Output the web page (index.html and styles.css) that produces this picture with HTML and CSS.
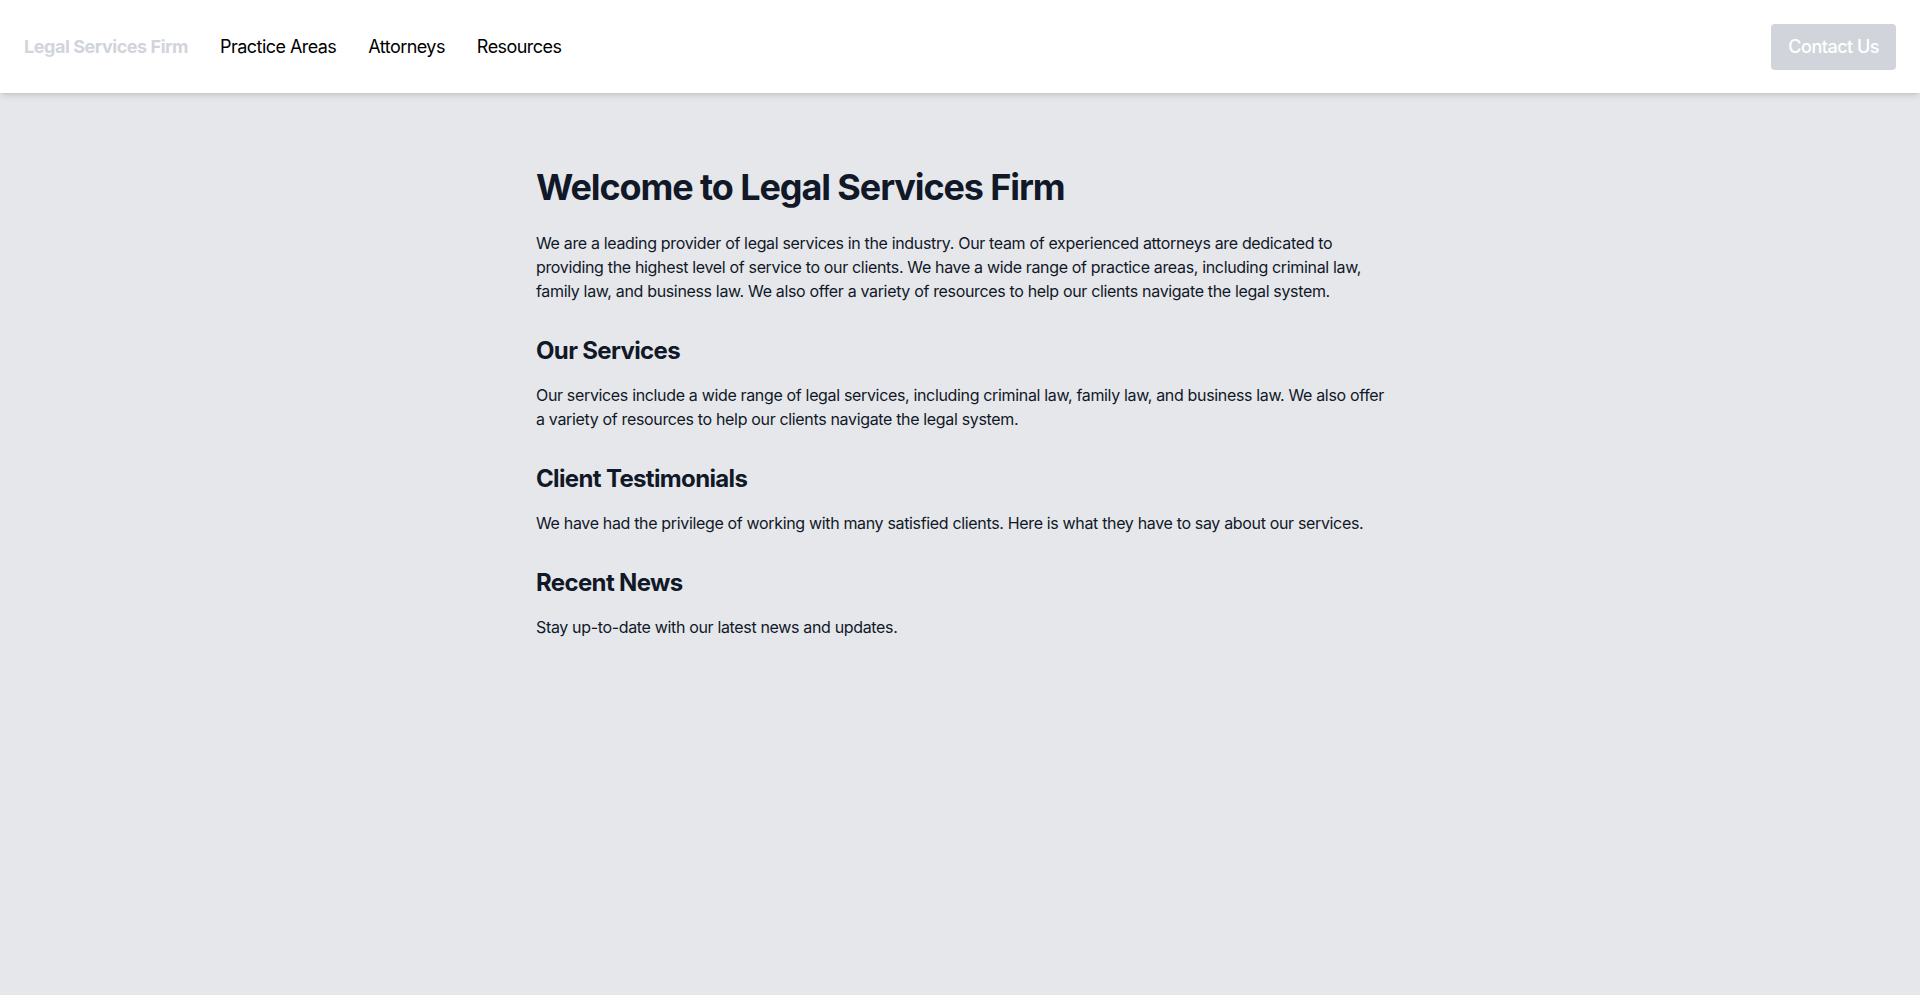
FILE: index.html
```html
<!DOCTYPE html>
<html lang="en">
<head>
<meta charset="utf-8">
<title>Legal Services Firm</title>
<link rel="stylesheet" href="styles.css">
</head>
<body>
<header class="site-header">
  <nav class="nav">
    <a class="brand" href="#">Legal Services Firm</a>
    <a class="nav-link" href="#">Practice Areas</a>
    <a class="nav-link" href="#">Attorneys</a>
    <a class="nav-link" href="#">Resources</a>
  </nav>
  <a class="contact-btn" href="#">Contact Us</a>
</header>
<main class="main">
  <div class="content">
    <section class="intro">
      <h1 class="title">Welcome to Legal Services Firm</h1>
      <p class="text">We are a leading provider of legal services in the industry. Our team of experienced attorneys are dedicated to providing the highest level of service to our clients. We have a wide range of practice areas, including criminal law, family law, and business law. We also offer a variety of resources to help our clients navigate the legal system.</p>
    </section>
    <section class="block">
      <h2 class="subtitle">Our Services</h2>
      <p class="text">Our services include a wide range of legal services, including criminal law, family law, and business law. We also offer a variety of resources to help our clients navigate the legal system.</p>
    </section>
    <section class="block">
      <h2 class="subtitle">Client Testimonials</h2>
      <p class="text">We have had the privilege of working with many satisfied clients. Here is what they have to say about our services.</p>
    </section>
    <section class="block">
      <h2 class="subtitle">Recent News</h2>
      <p class="text">Stay up-to-date with our latest news and updates.</p>
    </section>
  </div>
</main>
</body>
</html>
```
FILE: styles.css
```css
* { box-sizing: border-box; }
html, body { margin: 0; padding: 0; }
body {
  font-family: Inter, "Noto Sans", "Liberation Sans", sans-serif;
  background: #e5e7eb;
  color: #111827;
  min-height: 995px;
}
a { text-decoration: none; }
.site-header {
  position: relative;
  z-index: 1;
  height: 93px;
  padding: 1px 24px 0;
  background: #ffffff;
  display: flex;
  align-items: center;
  justify-content: space-between;
  box-shadow: 0 4px 6px -1px rgba(0,0,0,0.1), 0 2px 4px -2px rgba(0,0,0,0.1);
}
.nav {
  display: flex;
  align-items: center;
  gap: 32px;
}
.brand {
  font-size: 18px;
  line-height: 28px;
  font-weight: 700;
  letter-spacing: -0.45px;
  color: #d1d5db;
}
.nav-link {
  font-size: 18px;
  line-height: 28px;
  letter-spacing: -0.55px;
  color: #000000;
}
.contact-btn {
  display: block;
  height: 46px;
  padding: 9px 17px;
  font-size: 18px;
  line-height: 28px;
  font-weight: 500;
  letter-spacing: -0.5px;
  color: #ffffff;
  background: #d1d5db;
  border-radius: 4px;
}
.main {
  padding: 74px 20px 48px 24px;
}
.content {
  max-width: 852px;
  margin: 0 auto;
}
.intro { margin-bottom: 32px; }
.block { margin-bottom: 32px; }
.title {
  margin: 0 0 24px;
  font-size: 36px;
  line-height: 40px;
  font-weight: 700;
  letter-spacing: -1.1px;
  color: #111827;
}
.subtitle {
  margin: 0 0 16px;
  font-size: 24px;
  line-height: 32px;
  font-weight: 700;
  letter-spacing: -0.65px;
  color: #111827;
}
.text {
  margin: 0;
  font-size: 16px;
  line-height: 24px;
  letter-spacing: -0.34px;
  color: #111827;
}
```
